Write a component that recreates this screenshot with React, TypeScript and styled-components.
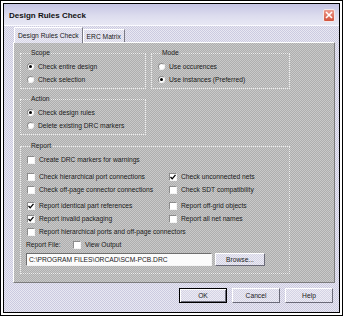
import React from "react";
import styled, { createGlobalStyle, css } from "styled-components";

const GlobalStyle = createGlobalStyle`
  html, body {
    margin: 0;
    padding: 0;
    background: #fff;
  }
  body {
    font-family: "Liberation Sans", Arial, sans-serif;
    color: #1a1a1a;
  }
`;

const dither = (a: string, b: string) => css`
  background-color: ${a};
  background-image: repeating-conic-gradient(${a} 0 25%, ${b} 0 50%);
  background-size: 2px 2px;
`;

const Frame = styled.div`
  width: 343px;
  height: 316px;
  box-sizing: border-box;
  border: 1px solid #000;
  padding: 2px;
  background: #fff;
`;

const Window = styled.div`
  height: 100%;
  box-sizing: border-box;
  border: 1px solid #000;
  display: flex;
  flex-direction: column;
  ${dither("#e9e8f2", "#cbcae0")}
`;

const TitleBar = styled.div`
  height: 22px;
  flex: none;
  display: flex;
  align-items: center;
  justify-content: space-between;
  padding: 1px 4px 0 5px;
  box-sizing: border-box;
  border-bottom: 1px solid #fafaff;
  background: linear-gradient(#c6c5e4, #dcdcee 55%, #e8e8f4);
`;

const Title = styled.span`
  font-size: 8px;
  font-weight: bold;
  color: #111;
`;

const CloseButton = styled.div`
  width: 12px;
  height: 13px;
  box-sizing: border-box;
  border: 1px solid #f4e8e8;
  border-radius: 2px;
  background: linear-gradient(#ec9a8c, #d2533e);
  display: flex;
  align-items: center;
  justify-content: center;
`;

const Body = styled.div`
  flex: 1;
  display: flex;
  flex-direction: column;
  padding: 1px 4px 0 9px;
`;

const TabStrip = styled.div`
  display: flex;
  align-items: flex-end;
  height: 15px;
  padding-left: 1px;
`;

const Tab = styled.div<{ $active?: boolean }>`
  box-sizing: border-box;
  height: ${(p) => (p.$active ? "16px" : "13px")};
  margin-bottom: ${(p) => (p.$active ? "-1px" : "0")};
  padding: 0 3px;
  display: flex;
  align-items: center;
  font-size: 6.7px;
  border: 1px solid;
  border-bottom: none;
  border-color: #fff #7a7a86 transparent #fff;
  position: relative;
  z-index: ${(p) => (p.$active ? 1 : 0)};
  ${dither("#ecebf4", "#d6d5e6")}
`;

const TabPage = styled.div`
  height: 241px;
  box-sizing: border-box;
  border: 1px solid;
  border-color: #fff #7c7c7c #7c7c7c #fff;
  padding: 6px 0 0 6px;
  display: grid;
  grid-template-columns: 126px 139px;
  column-gap: 5px;
  align-content: start;
  ${dither("#c9c9c9", "#aeaeae")}
`;

const Group = styled.fieldset<{ $span?: boolean; $top?: number; $bottom?: number }>`
  margin: ${(p) => p.$top ?? 0}px 0 0;
  min-width: 0;
  border: 1px dotted #efefef;
  padding: 3px 0 ${(p) => p.$bottom ?? 2}px 6px;
  grid-column: ${(p) => (p.$span ? "1 / span 2" : "auto")};
  font-size: 6.7px;
`;

const Legend = styled.legend`
  padding: 0 1px;
  margin-left: 3px;
  font-size: 6.7px;
  line-height: 8px;
`;

const Option = styled.div`
  display: flex;
  align-items: center;
  gap: 4px;
  height: 13px;
  white-space: nowrap;
  font-size: 6.7px;
`;

const RadioDot = styled.span<{ $on?: boolean }>`
  width: 7px;
  height: 7px;
  flex: none;
  border-radius: 50%;
  box-sizing: border-box;
  background: #fff;
  border: 1px solid;
  border-color: #8c8c8c #f4f4f4 #f4f4f4 #8c8c8c;
  display: flex;
  align-items: center;
  justify-content: center;

  &::after {
    content: "";
    width: 3px;
    height: 3px;
    border-radius: 50%;
    background: ${(p) => (p.$on ? "#000" : "transparent")};
  }
`;

const Box = styled.span`
  width: 8px;
  height: 8px;
  flex: none;
  box-sizing: border-box;
  background: #fff;
  border: 1px solid;
  border-color: #8c8c8c #f4f4f4 #f4f4f4 #8c8c8c;
  display: flex;
  align-items: center;
  justify-content: center;
`;

const CheckGrid = styled.div<{ $top: number }>`
  display: grid;
  grid-template-columns: 142px 1fr;
  margin-top: ${(p) => p.$top}px;
`;

const Wide = styled.div`
  grid-column: 1 / span 2;
`;

const FileRow = styled.div`
  display: flex;
  align-items: center;
  height: 13px;
  font-size: 6.7px;
  margin-left: -1px;
`;

const FileLabel = styled.span`
  width: 47px;
`;

const InputRow = styled.div`
  display: flex;
  align-items: center;
  gap: 3px;
  margin: 2px 0 0 -1px;
  height: 13px;
`;

const PathInput = styled.div`
  width: 186px;
  height: 13px;
  box-sizing: border-box;
  border: 1px solid;
  border-color: #6e6e6e #f4f4f4 #f4f4f4 #6e6e6e;
  background: #fbfbfb;
  font-size: 6.7px;
  display: flex;
  align-items: center;
  padding-left: 2px;
  white-space: nowrap;
`;

const Button = styled.div<{ $default?: boolean; $w?: number; $h?: number }>`
  width: ${(p) => p.$w ?? 48}px;
  height: ${(p) => p.$h ?? 15}px;
  box-sizing: border-box;
  border: 1px solid;
  border-color: ${(p) => (p.$default ? "#000" : "#fff #6a6a78 #6a6a78 #fff")};
  box-shadow: ${(p) => (p.$default ? "inset 1px 1px #fff, inset -1px -1px #6a6a78" : "none")};
  display: flex;
  align-items: center;
  justify-content: center;
  font-size: 6.7px;
  ${dither("#ecebf4", "#d4d3e4")}
`;

const ButtonRow = styled.div`
  display: flex;
  justify-content: flex-end;
  gap: 5px;
  margin-top: 5px;
  padding-right: 2px;
`;

const CheckMark = () => (
  <svg width="6" height="6" viewBox="0 0 6 6">
    <path d="M0.5 3 L2.2 4.8 L5.5 0.8" fill="none" stroke="#000" strokeWidth="1.3" />
  </svg>
);

const Radio: React.FC<{ on?: boolean; label: string }> = ({ on, label }) => (
  <Option>
    <RadioDot $on={on} />
    {label}
  </Option>
);

const Check: React.FC<{ on?: boolean; label: string }> = ({ on, label }) => (
  <Option>
    <Box>{on && <CheckMark />}</Box>
    {label}
  </Option>
);

export default function App() {
  return (
    <>
      <GlobalStyle />
      <Frame>
        <Window>
          <TitleBar>
            <Title>Design Rules Check</Title>
            <CloseButton>
              <svg width="8" height="8" viewBox="0 0 8 8">
                <path d="M1 1 L7 7 M7 1 L1 7" stroke="#fff" strokeWidth="1.6" />
              </svg>
            </CloseButton>
          </TitleBar>
          <Body>
            <TabStrip>
              <Tab $active>Design Rules Check</Tab>
              <Tab>ERC Matrix</Tab>
            </TabStrip>
            <TabPage>
              <Group>
                <Legend>Scope</Legend>
                <Radio on label="Check entire design" />
                <Radio label="Check selection" />
              </Group>
              <Group>
                <Legend>Mode</Legend>
                <Radio label="Use occurences" />
                <Radio on label="Use instances (Preferred)" />
              </Group>
              <Group $top={6}>
                <Legend>Action</Legend>
                <Radio on label="Check design rules" />
                <Radio label="Delete existing DRC markers" />
              </Group>
              <div />
              <Group $span $top={7} $bottom={7}>
                <Legend>Report</Legend>
                <Check label="Create DRC markers for warnings" />
                <CheckGrid $top={4}>
                  <Check label="Check hierarchical port connections" />
                  <Check on label="Check unconnected nets" />
                  <Check label="Check off-page connector connections" />
                  <Check label="Check SDT compatibility" />
                </CheckGrid>
                <CheckGrid $top={3}>
                  <Check on label="Report identical part references" />
                  <Check label="Report off-grid objects" />
                  <Check on label="Report invalid packaging" />
                  <Check label="Report all net names" />
                  <Wide>
                    <Check label="Report hierarchical ports and off-page connectors" />
                  </Wide>
                </CheckGrid>
                <FileRow>
                  <FileLabel>Report File:</FileLabel>
                  <Check label="View Output" />
                </FileRow>
                <InputRow>
                  <PathInput>C:\PROGRAM FILES\ORCAD\SCM-PCB.DRC</PathInput>
                  <Button $w={50} $h={13}>Browse...</Button>
                </InputRow>
              </Group>
            </TabPage>
            <ButtonRow>
              <Button $default>OK</Button>
              <Button>Cancel</Button>
              <Button>Help</Button>
            </ButtonRow>
          </Body>
        </Window>
      </Frame>
    </>
  );
}
